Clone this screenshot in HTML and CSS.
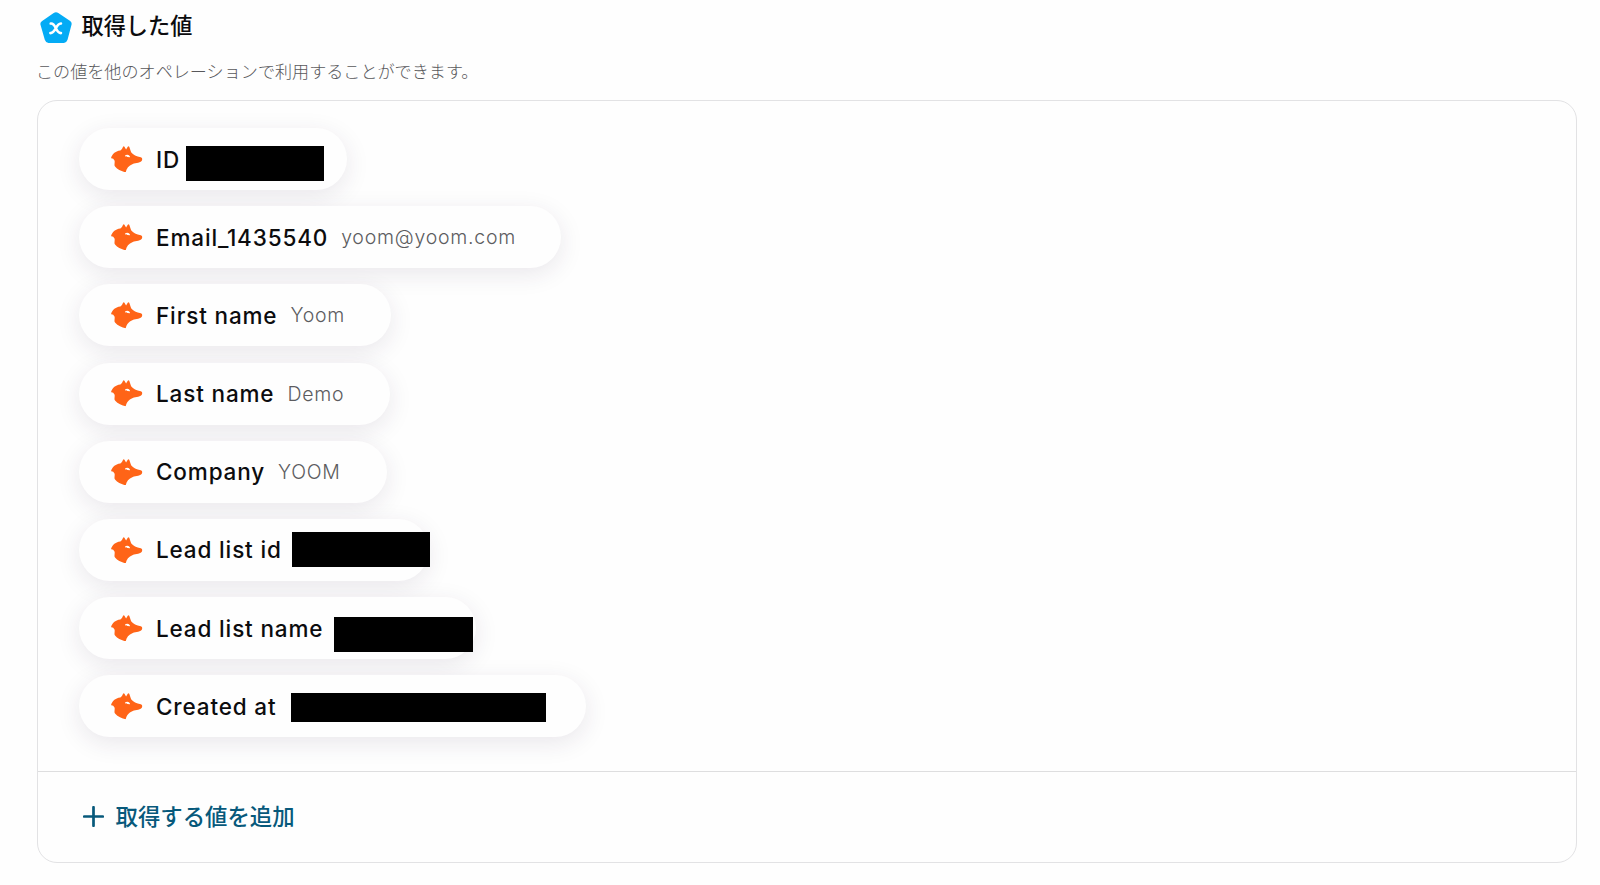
FILE: index.html
```
<!DOCTYPE html>
<html lang="ja">
<head>
    <meta charset="UTF-8">
    <meta name="viewport" content="width=device-width, initial-scale=1.0">
    <title>取得した値</title>
    <link rel="stylesheet" href="styles.css">
</head>
<body>
    <svg width="0" height="0" class="sprite">
        <symbol id="fox" viewBox="0 0 94 78">
            <path fill="#ff6417" d="M0 36 C3 24 12 15 28 13 Q33 11 36 2 Q38 -2 41 3 L45 10 L50 2 Q53 -2 55 3 L60 18 C66 26 76 31 89 33 Q95 35 93 41 C90 50 74 49 65 53 C52 58 46 67 44 78 C33 76 20 71 12 61 C8 55 13 48 10 42 Q7 35 0 36 Z"/>
            <path fill="#fff" d="M42 28 Q46 24 52 26 Q57 28 57 33 L49 32 Q46 29 42 31 Z"/>
        </symbol>
    </svg>

    <header class="header">
        <svg class="header-icon" viewBox="0 0 96 94">
            <path fill="#04abf5" d="M41 3 Q48 -1 55 3 L91 27 Q97 31 95 39 L83 84 Q80 93 72 94 L25 94 Q17 93 14 84 L1 39 Q-1 31 6 27 Z"/>
            <path fill="none" stroke="#fff" stroke-width="8" stroke-linecap="round" d="M32 35 C49 33 45 64 63 64 M63 35 C46 36 48 64 31 64"/>
        </svg>
        <h1 class="title">取得した値</h1>
    </header>
    <p class="description">この値を他のオペレーションで利用することができます。</p>

    <div class="panel">
        <ul class="value-list">
            <li class="value-item item-id">
                <svg class="fox"><use href="#fox"/></svg>
                <span class="name">ID</span>
                <span class="mask"></span>
            </li>
            <li class="value-item item-email">
                <svg class="fox"><use href="#fox"/></svg>
                <span class="name">Email_1435540</span>
                <span class="value">yoom@yoom.com</span>
            </li>
            <li class="value-item item-first">
                <svg class="fox"><use href="#fox"/></svg>
                <span class="name">First name</span>
                <span class="value">Yoom</span>
            </li>
            <li class="value-item item-last">
                <svg class="fox"><use href="#fox"/></svg>
                <span class="name">Last name</span>
                <span class="value">Demo</span>
            </li>
            <li class="value-item item-company">
                <svg class="fox"><use href="#fox"/></svg>
                <span class="name">Company</span>
                <span class="value">YOOM</span>
            </li>
            <li class="value-item item-list-id">
                <svg class="fox"><use href="#fox"/></svg>
                <span class="name">Lead list id</span>
                <span class="mask"></span>
            </li>
            <li class="value-item item-list-name">
                <svg class="fox"><use href="#fox"/></svg>
                <span class="name">Lead list name</span>
                <span class="mask"></span>
            </li>
            <li class="value-item item-created">
                <svg class="fox"><use href="#fox"/></svg>
                <span class="name">Created at</span>
                <span class="mask"></span>
            </li>
        </ul>
        <div class="panel-footer">
            <button type="button" class="add-btn">
                <svg class="plus" viewBox="0 0 21 21">
                    <path fill="none" stroke="currentColor" stroke-width="2.7" stroke-linecap="round" d="M10.5 1.2 V19.8 M1.2 10.5 H19.8"/>
                </svg>
                <span class="add-text">取得する値を追加</span>
            </button>
        </div>
    </div>
</body>
</html>
```
FILE: styles.css
```
* {
    margin: 0;
    padding: 0;
    box-sizing: border-box;
}

body {
    height: 885px;
    padding: 12px 24px 0 36.5px;
    background-color: #fefefe;
    font-family: 'Inter', 'Noto Sans CJK JP', sans-serif;
    overflow: hidden;
}

.sprite {
    display: block;
}

.header {
    display: flex;
    align-items: flex-start;
    gap: 10px;
    height: 44px;
    padding-left: 3px;
}

.header-icon {
    width: 32px;
    height: 31px;
}

.title {
    margin-top: -2px;
    font-size: 22.2px;
    line-height: 32px;
    font-weight: 500;
    color: #0c0c0e;
}

.description {
    height: 43.5px;
    margin-left: -0.5px;
    font-size: 17.1px;
    line-height: 32px;
    color: #58585b;
    font-weight: 300;
}

.panel {
    width: 1540px;
    height: 763px;
    border: 1.5px solid #e2e2e4;
    border-radius: 20px;
}

.value-list {
    display: flex;
    flex-direction: column;
    align-items: flex-start;
    gap: 16.2px;
    height: 671px;
    padding: 27.5px 0 0 41px;
    list-style: none;
    border-bottom: 1.5px solid #dededf;
}

.value-item {
    position: relative;
    display: flex;
    align-items: center;
    flex-shrink: 0;
    height: 62px;
    padding-left: 32.5px;
    border-radius: 31px;
    background-color: #fefefe;
    box-shadow: 0 6px 24px rgba(50, 30, 70, 0.1);
    white-space: nowrap;
}

.fox {
    width: 31.5px;
    height: 26.5px;
    margin-right: 13.5px;
}

.name {
    font-size: 22.5px;
    font-weight: 500;
    letter-spacing: 0.85px;
    color: #0c0c0e;
}

.value {
    margin-left: 13px;
    font-size: 19.5px;
    font-weight: 300;
    letter-spacing: 0.75px;
    color: #5c5c5f;
}

.item-id { width: 268.5px; }
.item-email { width: 482px; }
.item-first { width: 312px; }
.item-last { width: 311px; }
.item-company { width: 308px; }
.item-list-id { width: 350px; }
.item-list-name { width: 397px; }
.item-created { width: 507px; }

/* bars that hide the private values */
.mask {
    position: absolute;
    width: 138.5px;
    height: 35px;
    background-color: #000;
}

.item-id .mask {
    left: 107px;
    top: 18px;
}

.item-list-id .mask {
    left: 213px;
    top: 13px;
}

.item-list-name .mask {
    left: 255.5px;
    top: 20px;
}

.item-created .mask {
    left: 212px;
    top: 17.5px;
    width: 255px;
    height: 29px;
}

.panel-footer {
    display: flex;
    align-items: center;
    height: 89px;
    padding-left: 45px;
}

.add-btn {
    display: flex;
    align-items: center;
    gap: 12px;
    border: none;
    background: none;
    color: #07597b;
    font-family: inherit;
    font-size: 22.4px;
    font-weight: 500;
    cursor: pointer;
}

.add-text {
    margin-top: -2px;
}

.plus {
    width: 21px;
    height: 21px;
}
```
